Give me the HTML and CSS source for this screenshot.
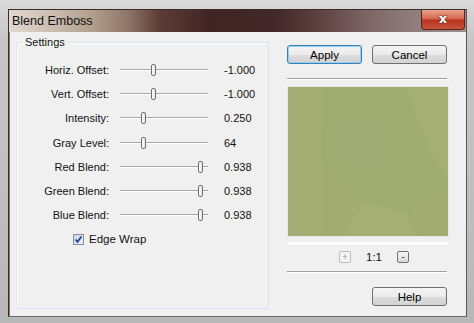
FILE: index.html
```html
<!DOCTYPE html>
<html>
<head>
  <meta charset="UTF-8">
  <title>Blend Emboss</title>
  <link rel="stylesheet" href="styles.css">
</head>
<body>
  <div class="window">
    <div class="frame">
      <div class="titlebar">
        <span class="title">Blend Emboss</span>
        <span class="close">x</span>
      </div>
      <div class="client">
        <fieldset class="settings">
          <legend>Settings</legend>
          <div class="row">
            <span class="label">Horiz. Offset:</span>
            <div class="slider"><span class="thumb" style="left: 31px;"></span></div>
            <span class="value">-1.000</span>
          </div>
          <div class="row">
            <span class="label">Vert. Offset:</span>
            <div class="slider"><span class="thumb" style="left: 31px;"></span></div>
            <span class="value">-1.000</span>
          </div>
          <div class="row">
            <span class="label">Intensity:</span>
            <div class="slider"><span class="thumb" style="left: 21px;"></span></div>
            <span class="value">0.250</span>
          </div>
          <div class="row">
            <span class="label">Gray Level:</span>
            <div class="slider"><span class="thumb" style="left: 21px;"></span></div>
            <span class="value">64</span>
          </div>
          <div class="row">
            <span class="label">Red Blend:</span>
            <div class="slider"><span class="thumb" style="left: 78px;"></span></div>
            <span class="value">0.938</span>
          </div>
          <div class="row">
            <span class="label">Green Blend:</span>
            <div class="slider"><span class="thumb" style="left: 78px;"></span></div>
            <span class="value">0.938</span>
          </div>
          <div class="row">
            <span class="label">Blue Blend:</span>
            <div class="slider"><span class="thumb" style="left: 78px;"></span></div>
            <span class="value">0.938</span>
          </div>
          <label class="check-row">
            <span class="checkbox">
              <svg width="9" height="9" viewBox="0 0 9 9"><path d="M1.5 4.5 L3.5 6.8 L7.5 1.5" fill="none" stroke="#23408a" stroke-width="1.8"/></svg>
            </span>
            Edge Wrap
          </label>
        </fieldset>

        <div class="side">
          <div class="buttons">
            <button class="btn default">Apply</button>
            <button class="btn">Cancel</button>
          </div>
          <div class="sep"></div>
          <div class="preview">
            <svg width="160" height="149" viewBox="0 0 160 149">
              <polygon points="0,0 36,0 34,149 0,149" fill="#a6b078" opacity="0.35"/>
              <polygon points="0,100 35,75 75,115 60,149 0,149" fill="#a3ad74" opacity="0.5"/>
              <polygon points="75,115 118,125 128,149 58,149" fill="#aab47d" opacity="0.4"/>
              <polygon points="118,0 160,0 160,95 140,60" fill="#a8b27a" opacity="0.45"/>
              <polygon points="40,40 95,30 100,80 60,75" fill="#a7b17a" opacity="0.3"/>
              <polygon points="120,120 160,100 160,149 135,149" fill="#a4ae75" opacity="0.4"/>
            </svg>
          </div>
          <div class="white-line"></div>
          <div class="zoom">
            <span class="zbtn off">+</span>
            <span class="ratio">1:1</span>
            <span class="zbtn">-</span>
          </div>
          <div class="sep"></div>
          <div class="buttons end">
            <button class="btn">Help</button>
          </div>
        </div>
      </div>
    </div>
  </div>
</body>
</html>
```

FILE: styles.css
```css
/* window frame */
body {
  margin: 0;
  background: #c4c4c4;
  font-family: "Liberation Sans", Arial, sans-serif;
  font-size: 11px;
  color: #111;
}

.window {
  width: 474px;
  height: 323px;
  box-sizing: border-box;
  padding: 9px 7px 6px 8px;
  background: linear-gradient(#dadada, #c6c6c6 40px, #b8b8b8);
  display: flex;
}

.frame {
  flex: 1;
  display: flex;
  flex-direction: column;
  border: 1px solid #3e2c28;
  border-right-color: #5c5656;
  border-bottom-color: #6a6a6a;
}

/* title bar */
.titlebar {
  height: 22px;
  display: flex;
  align-items: flex-start;
  justify-content: space-between;
  background: linear-gradient(90deg, #e0d8d0 0%, #cfc2b5 8%, #b39f8e 18%, #8e7668 26%, #5c3c36 33%, #402424 44%, #412727 58%, #5d4141 68%, #7c6464 78%, #8e7d7d 88%, #9b8e8e 100%);
}

.title {
  font-size: 12.5px;
  line-height: 22px;
  padding-left: 3px;
  color: #111;
}

.close {
  width: 44px;
  height: 20px;
  margin-right: 1px;
  box-sizing: border-box;
  border: 1px solid #5e2418;
  border-top: none;
  border-radius: 0 0 4px 4px;
  background: linear-gradient(#e9a38e, #d4684e 45%, #b9341f 55%, #c9543c);
  color: #fff;
  font: bold 13px/18px "DejaVu Sans", sans-serif;
  text-align: center;
  text-shadow: 0 0 2px #4a1208, 0 0 1px #4a1208;
}

/* client area */
.client {
  flex: 1;
  display: flex;
  background: #f0f0f0;
  border-left: 1px solid #8c7468;
  padding: 0 0 0 6px;
}

.settings {
  width: 253px;
  height: 273px;
  box-sizing: border-box;
  margin: 4px 0 0 0;
  padding: 0;
  border: 1px solid #d9e2e8;
  box-shadow: inset 1px 1px #fff;
  border-radius: 2px;
}

.settings legend {
  margin-left: 6px;
  padding: 0 2px;
  line-height: 13px;
}

.row {
  display: flex;
  align-items: center;
  height: 24.2px;
}

.row:first-of-type {
  margin-top: 9px;
}

.label {
  width: 92px;
  text-align: right;
}

.slider {
  position: relative;
  width: 88px;
  height: 12px;
  margin-left: 11px;
}

.slider::before {
  content: "";
  position: absolute;
  left: 0;
  right: 0;
  top: 5px;
  border-top: 1px solid #a8a8a8;
  border-bottom: 1px solid #fff;
}

.thumb {
  position: absolute;
  top: 0;
  width: 5px;
  height: 12px;
  box-sizing: border-box;
  border: 1px solid #6e6e6e;
  border-radius: 2px;
  background: linear-gradient(90deg, #fff, #e6e6e6);
}

.value {
  margin-left: 16px;
}

.check-row {
  display: flex;
  align-items: center;
  gap: 5px;
  height: 24px;
  margin-left: 56px;
  font-size: 11.5px;
}

.checkbox {
  width: 11px;
  height: 11px;
  box-sizing: border-box;
  border: 1px solid #8a8f96;
  background: linear-gradient(135deg, #c8d4ea, #eef2f8);
  display: flex;
  align-items: center;
  justify-content: center;
}

/* right column */
.side {
  width: 162px;
  margin-left: 18px;
  padding-top: 13px;
  display: flex;
  flex-direction: column;
}

.buttons {
  display: flex;
  gap: 10px;
  width: 160px;
}

.buttons.end {
  justify-content: flex-end;
  margin-top: 14px;
}

.btn {
  width: 75px;
  height: 19px;
  padding: 0;
  border: 1px solid #707070;
  border-radius: 3px;
  background: linear-gradient(#f4f4f4, #ebebeb 50%, #dcdcdc 51%, #d3d3d3);
  font-family: "Liberation Sans", Arial, sans-serif;
  font-size: 11.5px;
  color: #000;
}

.btn.default {
  border-color: #3c7fb1;
  box-shadow: inset 0 0 0 1px #8ed3f7;
}

.sep {
  width: 160px;
  margin-top: 14px;
  border-top: 1px solid #a0a0a0;
  border-bottom: 1px solid #fff;
}

.zoom + .sep {
  margin-top: 8px;
}

.preview {
  width: 160px;
  height: 149px;
  margin-top: 6px;
  border: 1px solid #e6e6e6;
  background: #a0ab71;
  line-height: 0;
}

.white-line {
  width: 160px;
  height: 3px;
  margin: 5px 0 0 1px;
  background: #fff;
}

.zoom {
  display: flex;
  align-items: center;
  gap: 15px;
  height: 12px;
  margin-top: 6px;
  width: 128px;
  margin-left: 52px;
}

.zbtn {
  width: 12px;
  height: 12px;
  box-sizing: border-box;
  border: 1px solid #707070;
  border-radius: 2px;
  background: linear-gradient(#f6f6f6, #dadada);
  font-size: 9px;
  line-height: 10px;
  text-align: center;
}

.zbtn.off {
  border-color: #bcbcbc;
  background: #f4f4f4;
  color: #9a9a9a;
}

.ratio {
  font-size: 11.5px;
}
```
